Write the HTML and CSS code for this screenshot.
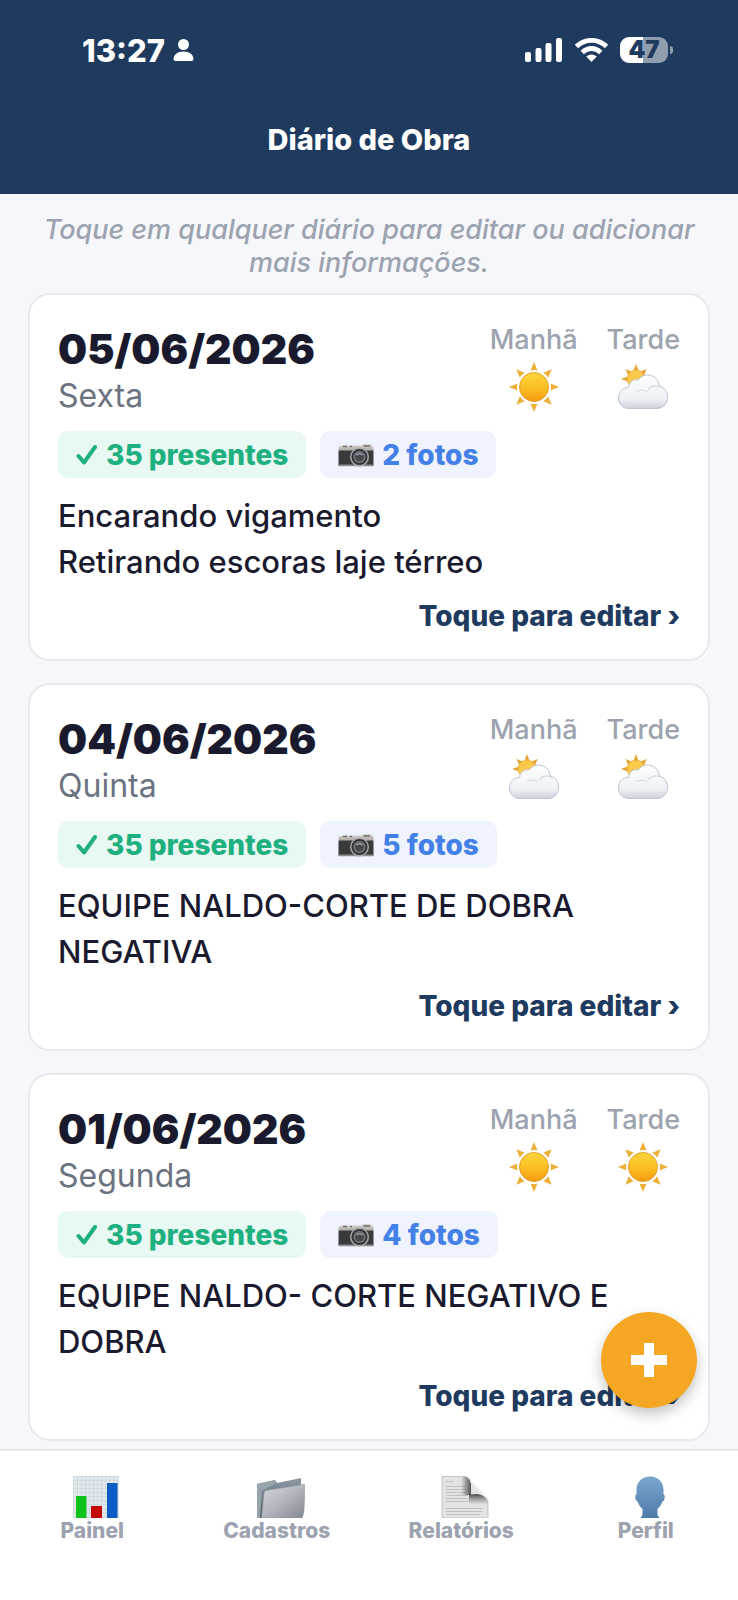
FILE: index.html
```html
<!DOCTYPE html>
<html lang="pt-BR">

<head>
  <meta charset="UTF-8">
  <meta name="viewport" content="width=device-width, initial-scale=1.0">
  <title>Diário de Obra</title>
  <link rel="stylesheet" href="styles.css">
</head>

<body>
  <!-- shared icons -->
  <svg class="sprite" width="0" height="0" aria-hidden="true">
    <defs>
      <linearGradient id="sunFill" x1="0" y1="0" x2="0" y2="1">
        <stop offset="0" stop-color="#fbd63c" />
        <stop offset="0.55" stop-color="#fbbd23" />
        <stop offset="1" stop-color="#f59a10" />
      </linearGradient>
      <linearGradient id="cloudFill" x1="0" y1="0" x2="0" y2="1">
        <stop offset="0" stop-color="#fdfdfe" />
        <stop offset="0.7" stop-color="#f0f2f6" />
        <stop offset="1" stop-color="#ccd3dc" />
      </linearGradient>
      <linearGradient id="silver" x1="0" y1="0" x2="0" y2="1">
        <stop offset="0" stop-color="#dcdad6" />
        <stop offset="1" stop-color="#aaa7a2" />
      </linearGradient>
      <linearGradient id="folderFront" x1="0" y1="0" x2="1" y2="1">
        <stop offset="0" stop-color="#d3d6dc" />
        <stop offset="0.5" stop-color="#b2b6be" />
        <stop offset="1" stop-color="#7f858e" />
      </linearGradient>
      <linearGradient id="folderBack" x1="0" y1="0" x2="0" y2="1">
        <stop offset="0" stop-color="#8e9aa3" />
        <stop offset="1" stop-color="#4b5660" />
      </linearGradient>
      <linearGradient id="curl" x1="0" y1="1" x2="1" y2="0">
        <stop offset="0" stop-color="#bdbdbd" />
        <stop offset="0.4" stop-color="#e2e2e2" />
        <stop offset="1" stop-color="#ffffff" />
      </linearGradient>
      <linearGradient id="curlSide" x1="0" y1="0" x2="1" y2="0">
        <stop offset="0" stop-color="#444444" stop-opacity="0" />
        <stop offset="1" stop-color="#444444" stop-opacity="0.9" />
      </linearGradient>
      <linearGradient id="curlShadow" x1="0" y1="0" x2="0" y2="1">
        <stop offset="0" stop-color="#444444" />
        <stop offset="1" stop-color="#888888" stop-opacity="0" />
      </linearGradient>
      <linearGradient id="bust" x1="0" y1="0" x2="0" y2="1">
        <stop offset="0" stop-color="#7ba7cf" />
        <stop offset="1" stop-color="#4d7ba8" />
      </linearGradient>

      <symbol id="sun" viewBox="0 0 50 50">
        <g fill="#ecb038">
          <path id="ray" d="M25 0L28.500 8.500Q25 7.500 21.500 8.500Z" />
          <use href="#ray" transform="rotate(45 25 25)" />
          <use href="#ray" transform="rotate(90 25 25)" />
          <use href="#ray" transform="rotate(135 25 25)" />
          <use href="#ray" transform="rotate(180 25 25)" />
          <use href="#ray" transform="rotate(225 25 25)" />
          <use href="#ray" transform="rotate(270 25 25)" />
          <use href="#ray" transform="rotate(315 25 25)" />
        </g>
        <circle cx="25" cy="25" r="14.500" fill="url(#sunFill)" stroke="#e3a02c" stroke-width="1" />
      </symbol>

      <symbol id="cloud" viewBox="0 0 50 50">
        <g fill="#e3a637">
          <path d="M18 2L21 10H15ZM7.500 7L15 10L10.500 14ZM28.500 7L26 14L21 10ZM3 17L11 14V20Z" />
        </g>
        <circle cx="18" cy="17" r="9" fill="#fbc94c" stroke="#e6aa3c" stroke-width="0.7" />
        <path d="M11 46.500C4 46.500 0.500 41.500 0.500 36C0.500 29.500 5 25.500 10.500 25.500C11 18.500 17 17 20 18C22.500 14.500 26 13 29.500 13C36 13 41 17.500 41.500 24.500C46.500 25 49.500 29.500 49.500 35C49.500 41.500 45.500 46.500 39 46.500Z" fill="url(#cloudFill)" stroke="#bec6d1" stroke-width="1" />
        <path d="M18 29.500C21 27.500 26 27.500 29 29.500M30 28C33 24 37 23 41.500 24.500" fill="none" stroke="#d3d8df" stroke-width="1.200" />
      </symbol>

      <symbol id="camera" viewBox="0 0 36 26">
        <path d="M3 3.500H24L25 2H33L34 3.500Q35.500 4 35.500 6V9H0.500V6Q0.500 4 3 3.500Z" fill="url(#silver)" />
        <rect x="0.500" y="8.500" width="35" height="15.500" rx="1" fill="#393a3b" />
        <rect x="0.500" y="22.500" width="35" height="1.800" rx="0.900" fill="#8c8d8e" />
        <path d="M5 4.500H9M12 4.500H14M25.500 4H32" stroke="#716f6b" stroke-width="1.400" />
        <circle cx="21.500" cy="15" r="9.500" fill="#a6a7a8" />
        <circle cx="21.500" cy="15" r="8" fill="#333639" />
        <circle cx="21.500" cy="15" r="6" fill="#777c80" />
        <circle cx="21.500" cy="15" r="4.500" fill="#44494d" />
        <path d="M18.500 13Q21.500 10.500 24.500 13" fill="none" stroke="#b9c0c4" stroke-width="1.200" />
      </symbol>

      <symbol id="check" viewBox="0 0 22 22">
        <path d="M2.500 12L8 18.500L19 3" fill="none" stroke="currentColor" stroke-width="4" stroke-linecap="round" stroke-linejoin="round" />
      </symbol>
    </defs>
  </svg>

  <header class="header">
    <div class="statusbar">
      <div class="clock">
        <span>13:27</span>
        <svg width="21" height="22" viewBox="0 0 21 22" fill="currentColor" aria-hidden="true">
          <circle cx="10.500" cy="5.500" r="5.500" />
          <path d="M10.500 12.500C16.500 12.500 20.500 16 20.500 20Q20.500 22 18.500 22H2.500Q0.500 22 0.500 20C0.500 16 4.500 12.500 10.500 12.500Z" />
        </svg>
      </div>
      <div class="indicators">
        <svg width="38" height="24" viewBox="0 0 38 24" fill="currentColor" aria-hidden="true">
          <rect x="0" y="14" width="6" height="10" rx="2" />
          <rect x="10.500" y="10" width="6" height="14" rx="2" />
          <rect x="20.500" y="5" width="6" height="19" rx="2" />
          <rect x="31" y="0" width="6" height="24" rx="2" />
        </svg>
        <svg width="33" height="24" viewBox="0 0 33 24" aria-hidden="true">
          <path d="M1.500 8.500Q8 2.300 16.500 2.300T31.500 8.500M7.200 14.500Q11.500 10.500 16.500 10.500T25.800 14.500" fill="none" stroke="currentColor" stroke-width="4.800" />
          <path d="M11.200 18.500Q16.500 14.500 21.800 18.500L16.500 24Z" fill="currentColor" />
        </svg>
        <div class="battery"><span>47</span></div>
      </div>
    </div>
    <h1>Diário de Obra</h1>
  </header>

  <main class="content">
    <p class="hint">Toque em qualquer diário para editar ou adicionar mais informações.</p>

    <article class="card">
      <div class="card-top">
        <div>
          <h2>05/06/2026</h2>
          <p class="weekday">Sexta</p>
        </div>
        <div class="weather">
          <div class="period">Manhã<svg><use href="#sun" /></svg></div>
          <div class="period">Tarde<svg><use href="#cloud" /></svg></div>
        </div>
      </div>
      <div class="badges">
        <span class="badge green"><svg class="check"><use href="#check" /></svg>35 presentes</span>
        <span class="badge blue"><svg class="camera"><use href="#camera" /></svg>2 fotos</span>
      </div>
      <p class="description">Encarando vigamento<br>Retirando escoras laje térreo</p>
      <a class="edit" href="#">Toque para editar ›</a>
    </article>

    <article class="card">
      <div class="card-top">
        <div>
          <h2>04/06/2026</h2>
          <p class="weekday">Quinta</p>
        </div>
        <div class="weather">
          <div class="period">Manhã<svg><use href="#cloud" /></svg></div>
          <div class="period">Tarde<svg><use href="#cloud" /></svg></div>
        </div>
      </div>
      <div class="badges">
        <span class="badge green"><svg class="check"><use href="#check" /></svg>35 presentes</span>
        <span class="badge blue"><svg class="camera"><use href="#camera" /></svg>5 fotos</span>
      </div>
      <p class="description">EQUIPE NALDO-CORTE DE DOBRA NEGATIVA</p>
      <a class="edit" href="#">Toque para editar ›</a>
    </article>

    <article class="card">
      <div class="card-top">
        <div>
          <h2>01/06/2026</h2>
          <p class="weekday">Segunda</p>
        </div>
        <div class="weather">
          <div class="period">Manhã<svg><use href="#sun" /></svg></div>
          <div class="period">Tarde<svg><use href="#sun" /></svg></div>
        </div>
      </div>
      <div class="badges">
        <span class="badge green"><svg class="check"><use href="#check" /></svg>35 presentes</span>
        <span class="badge blue"><svg class="camera"><use href="#camera" /></svg>4 fotos</span>
      </div>
      <p class="description">EQUIPE NALDO- CORTE NEGATIVO E DOBRA</p>
      <a class="edit" href="#">Toque para editar ›</a>
    </article>
  </main>

  <button class="fab" type="button" aria-label="Adicionar diário">
    <svg width="36" height="34" viewBox="0 0 36 34" aria-hidden="true">
      <path d="M13 0H23V12H36V22H23V34H13V22H0V12H13Z" fill="currentColor" />
    </svg>
  </button>

  <nav class="tabbar">
    <a href="#">
      <svg viewBox="0 0 48 42" aria-hidden="true">
        <rect x="1" width="46" height="42" fill="#e3e8ec" />
        <path d="M1 0.500H47M1 4.500H47M1 8.500H47M1 12.500H47M1 16.500H47M1 20.500H47M1 24.500H47M1 28.500H47M1 32.500H47M1 36.500H47M1 40.500H47M1.500 0V42M5.500 0V42M9.500 0V42M13.500 0V42M17.500 0V42M21.500 0V42M25.500 0V42M29.500 0V42M33.500 0V42M37.500 0V42M41.500 0V42M45.500 0V42" stroke="#cdd6dc" stroke-width="0.800" />
        <rect x="4" y="20" width="10.500" height="22" fill="#0cc21b" />
        <rect x="19" y="30" width="11" height="12" fill="#c40808" />
        <rect x="35" y="7" width="10.500" height="35" fill="#0b5bc4" />
      </svg>
      Painel
    </a>
    <a href="#">
      <svg viewBox="0 0 48 42" aria-hidden="true">
        <path d="M0 8L18 4L20 7L44 2V12L8 42H0Z" fill="url(#folderBack)" />
        <path d="M0 8L18 4L19 7L5 15L3 42H0Z" fill="#97a4ab" />
        <path d="M7 17Q7 15 9 14.500L46 8.500Q48 8 48 10L47 34Q46.500 39 45 42H4.500Z" fill="url(#folderFront)" stroke="#8f959d" stroke-width="0.600" />
      </svg>
      Cadastros
    </a>
    <a href="#">
      <svg viewBox="0 0 48 42" aria-hidden="true">
        <path d="M1 0.500H23Q29 1 30 7V18H39Q46 19 47 26V42H1Z" fill="#e3e3e3" stroke="#bdbdbd" stroke-width="0.800" />
        <path d="M5 5.500H13M5 10.500H26M5 13.500H26M5 16.500H26M5 19.500H27M5 22.500H28M5 25.500H28M5 32.500H41M5 35.500H41M5 38.500H39" stroke="#bcbcbc" stroke-width="0.900" />
        <path d="M20 0.500H23Q29 1 30 7V19H20Z" fill="url(#curlSide)" />
        <path d="M28 18H39Q46 19 47 26V29H28Z" fill="url(#curlShadow)" />
        <path d="M23 0.500Q27 1 29 4L45 20Q47 22 47 26Q44 18.500 36 18L30 18.500V8Q29 2 23 0.500Z" fill="url(#curl)" />
      </svg>
      Relatórios
    </a>
    <a href="#">
      <svg viewBox="0 0 48 42" aria-hidden="true">
        <path d="M24 0.500C32 0.500 37.500 6 37.500 14V18.500Q39 18.500 38.700 21.500Q38.500 25 36.500 25.500Q35 30 31.500 33V38Q31.500 40.500 33.500 42H14.500Q16.500 40.500 16.500 38V33Q13 30 11.500 25.500Q9.500 25 9.300 21.500Q9 18.500 10.500 18.500V14C10.500 6 16 0.500 24 0.500Z" fill="url(#bust)" />
      </svg>
      Perfil
    </a>
  </nav>
</body>

</html>
```
FILE: styles.css
```css
* {
  box-sizing: border-box;
}

body {
  display: flex;
  flex-direction: column;
  height: 100vh;
  margin: 0;
  background-color: #f5f7fb;
  color: #1a1a2e;
  font-family: 'Inter', 'Liberation Sans', sans-serif;
  font-weight: 500;
}

h1,
h2,
p {
  margin: 0;
}

a {
  text-decoration: none;
}

.sprite {
  position: absolute;
}

.header {
  flex: none;
  background-color: #1e3a5f;
  color: #ffffff;
  padding: 32px 0 36px;
}

.statusbar {
  display: flex;
  justify-content: space-between;
  align-items: center;
  height: 36px;
  padding: 0 66px 0 82px;
}

.clock {
  display: flex;
  align-items: center;
  gap: 8px;
  font-size: 31px;
  font-weight: 800;
}

.indicators {
  display: flex;
  align-items: center;
  gap: 12px;
}

.battery {
  position: relative;
  width: 48px;
  height: 26px;
  margin-right: 4px;
  border-radius: 9px;
  background: linear-gradient(to right, #ffffff 48%, #8f9daf 48%);
  color: #1e3a5f;
  font-size: 24px;
  font-weight: 900;
  line-height: 26px;
  text-align: center;
}

.battery::after {
  content: "";
  position: absolute;
  left: 50px;
  top: 9px;
  width: 3px;
  height: 8px;
  border-radius: 0 4px 4px 0;
  background-color: #8f9daf;
}

.header h1 {
  margin-top: 54px;
  font-size: 29px;
  font-weight: 800;
  line-height: 36px;
  text-align: center;
}

.content {
  flex: 1;
  overflow-y: auto;
  scrollbar-width: none;
  padding: 19px 28px 6px;
}

.hint {
  margin-bottom: 14px;
  color: #9ca3af;
  font-size: 27px;
  font-style: italic;
  line-height: 33px;
  text-align: center;
}

.card {
  display: flex;
  flex-direction: column;
  margin-bottom: 22px;
  padding: 28px 28px 26px;
  border: 2px solid #e7e9ee;
  border-radius: 22px;
  background-color: #ffffff;
}

.card:last-child {
  margin-bottom: 0;
}

.card-top {
  display: flex;
  justify-content: space-between;
}

.card h2 {
  font-size: 41px;
  font-weight: 900;
  line-height: 53px;
}

.weekday {
  color: #6b7280;
  font-size: 32px;
  font-weight: 400;
  line-height: 39px;
}

.weather {
  display: flex;
  gap: 29px;
}

.period {
  display: flex;
  flex-direction: column;
  align-items: center;
  gap: 6px;
  color: #9ca3af;
  font-size: 27px;
  line-height: 33px;
}

.period svg {
  width: 50px;
  height: 50px;
}

.badges {
  display: flex;
  gap: 14px;
  margin: 16px 0 15px;
}

.badge {
  display: flex;
  align-items: center;
  gap: 8px;
  height: 47px;
  padding: 0 18px;
  border-radius: 10px;
  font-size: 28px;
  font-weight: 800;
}

.badge.green {
  background-color: #e8f8f3;
  color: #1fb080;
}

.badge.blue {
  background-color: #eff3fe;
  color: #4380e8;
}

.check {
  width: 22px;
  height: 22px;
}

.camera {
  width: 36px;
  height: 26px;
}

.description {
  font-size: 31px;
  line-height: 46px;
}

.edit {
  align-self: flex-end;
  margin-top: 15px;
  color: #1e3a5f;
  font-size: 28px;
  font-weight: 800;
  line-height: 33px;
}

.fab {
  position: fixed;
  right: 41px;
  bottom: 192px;
  display: flex;
  align-items: center;
  justify-content: center;
  width: 96px;
  height: 96px;
  padding: 0;
  border: none;
  border-radius: 50%;
  background-color: #f5a623;
  color: #ffffff;
  box-shadow: 0 6px 14px rgba(0, 0, 0, 0.24);
  cursor: pointer;
}

.tabbar {
  flex: none;
  display: grid;
  grid-template-columns: repeat(4, 1fr);
  padding: 25px 0 56px;
  border-top: 2px solid #e5e7eb;
  background-color: #ffffff;
}

.tabbar a {
  display: flex;
  flex-direction: column;
  align-items: center;
  color: #9ca3af;
  font-size: 21px;
  font-weight: 800;
  line-height: 26px;
}

.tabbar svg {
  width: 48px;
  height: 42px;
  margin-left: 8px;
}
```
